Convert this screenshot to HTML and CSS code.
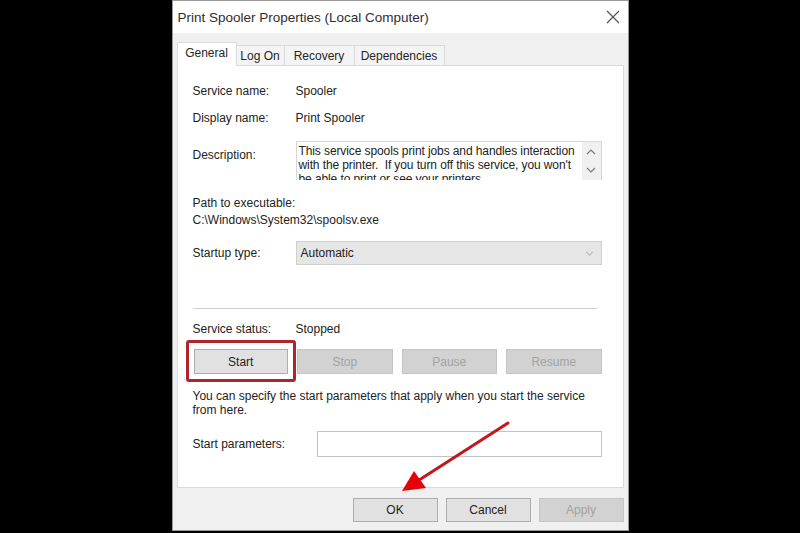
FILE: index.html
```html
<!DOCTYPE html>
<html>
<head>
<meta charset="utf-8">
<link rel="stylesheet" href="styles.css">
</head>
<body>
<div class="stage">
  <div class="dialog">
    <div class="titlebar">
      <span class="title">Print Spooler Properties (Local Computer)</span>
      <svg class="close" width="14" height="14" viewBox="0 0 14 14"><path d="M1 1L13 13M13 1L1 13" stroke="#555" stroke-width="1.2" fill="none"/></svg>
    </div>
    <div class="body">
      <div class="tabs">
        <div class="tab active t-general">General</div>
        <div class="tab t-logon">Log On</div>
        <div class="tab t-recovery">Recovery</div>
        <div class="tab t-deps">Dependencies</div>
      </div>
      <div class="panel">
        <div class="row r1"><span class="lbl">Service name:</span><span>Spooler</span></div>
        <div class="row r2"><span class="lbl">Display name:</span><span>Print Spooler</span></div>
        <div class="desc-row">
          <span class="lbl desc-lbl">Description:</span>
          <div class="descbox">
            <div class="desc-text">
              <div>This service spools print jobs and handles interaction</div>
              <div>with the printer.&nbsp; If you turn off this service, you won't</div>
              <div>be able to print or see your printers.</div>
            </div>
            <div class="scrollbar">
              <svg width="10" height="6" viewBox="0 0 10 6"><path d="M1 5L5 1L9 5" stroke="#777" stroke-width="1.1" fill="none"/></svg>
              <svg width="10" height="6" viewBox="0 0 10 6"><path d="M1 1L5 5L9 1" stroke="#777" stroke-width="1.1" fill="none"/></svg>
            </div>
          </div>
        </div>
        <div class="line path-lbl">Path to executable:</div>
        <div class="line path-val">C:\Windows\System32\spoolsv.exe</div>
        <div class="row startup-row">
          <span class="lbl">Startup type:</span>
          <div class="combo">
            <span>Automatic</span>
            <svg width="9" height="5" viewBox="0 0 10 6"><path d="M1 1L5 5L9 1" stroke="#9a9a9a" stroke-width="1.1" fill="none"/></svg>
          </div>
        </div>
        <div class="sep"></div>
        <div class="row status-row"><span class="lbl">Service status:</span><span>Stopped</span></div>
        <div class="btnrow">
          <div class="start-wrap">
            <div class="btn">Start</div>
            <div class="highlight"></div>
          </div>
          <div class="btn disabled">Stop</div>
          <div class="btn disabled">Pause</div>
          <div class="btn disabled">Resume</div>
        </div>
        <div class="help">You can specify the start parameters that apply when you start the service<br>from here.</div>
        <div class="row params-row">
          <span class="lbl params-lbl">Start parameters:</span>
          <div class="input"></div>
        </div>
      </div>
      <div class="footer">
        <div class="btn fbtn">OK</div>
        <div class="btn fbtn">Cancel</div>
        <div class="btn fbtn disabled">Apply</div>
      </div>
    </div>
  </div>
  <svg class="arrow" width="800" height="533" viewBox="0 0 800 533">
    <line x1="508" y1="423" x2="416" y2="482" stroke="#c4161c" stroke-width="3" stroke-linecap="round"/>
    <polygon points="402,491 414,471 426,488" fill="#e6000a"/>
  </svg>
</div>
</body>
</html>
```

FILE: styles.css
```css
html, body {
  margin: 0;
  padding: 0;
  background: #000;
  width: 800px;
  height: 533px;
  overflow: hidden;
  font-family: "Liberation Sans", Arial, sans-serif;
  font-size: 12px;
  color: #222;
}

.stage {
  position: relative;
  width: 800px;
  height: 533px;
  display: flex;
  justify-content: center;
}

.dialog {
  box-sizing: border-box;
  width: 457px;
  height: 531px;
  border: 1px solid #9a9a9a;
  background: #f0f0f0;
  display: flex;
  flex-direction: column;
}

.titlebar {
  height: 32px;
  background: #fff;
  display: flex;
  align-items: center;
  justify-content: space-between;
  padding-left: 5px;
  padding-right: 8px;
}

.title {
  font-size: 13.5px;
  color: #2e2e2e;
}

.body {
  padding: 9px 4px 0 4px;
  display: flex;
  flex-direction: column;
}

.tabs {
  display: flex;
  align-items: flex-end;
  height: 23px;
  position: relative;
  z-index: 1;
}

.tab {
  box-sizing: border-box;
  height: 20px;
  line-height: 20px;
  text-align: center;
  background: #f4f4f4;
  border: 1px solid #dadada;
  border-bottom: none;
  margin-left: -1px;
  color: #262626;
}

.tab.active {
  height: 24px;
  line-height: 21px;
  background: #fff;
  margin-left: 0;
  margin-bottom: -1px;
  position: relative;
  z-index: 2;
}

.t-general { width: 60px; }
.t-logon { width: 49px; }
.t-recovery { width: 71px; }
.t-deps { width: 91px; }

.panel {
  box-sizing: border-box;
  height: 423px;
  background: #fff;
  border: 1px solid #dadada;
  padding: 17px 21px 0 15px;
  display: flex;
  flex-direction: column;
}

.row {
  display: flex;
  align-items: center;
  height: 16px;
  line-height: 16px;
}

.lbl {
  width: 103px;
  flex: none;
}

.r2 { margin-top: 11px; }

.desc-row {
  display: flex;
  margin-top: 15px;
  height: 39px;
}

.desc-lbl {
  margin-top: 6px;
  line-height: 16px;
  height: 16px;
}

.descbox {
  box-sizing: border-box;
  width: 306px;
  height: 39px;
  border: 1px solid #d6d6d6;
  border-bottom: none;
  display: flex;
  overflow: hidden;
}

.desc-text {
  flex: 1;
  padding: 2px 0 0 2px;
  line-height: 14px;
  letter-spacing: -0.1px;
  white-space: nowrap;
  overflow: hidden;
}

.scrollbar {
  width: 19px;
  background: #f0f0f0;
  display: flex;
  flex-direction: column;
  align-items: center;
  justify-content: space-between;
  padding: 7px 0 7px 0;
}

.line {
  height: 16px;
  line-height: 16px;
}

.path-lbl { margin-top: 15px; }
.path-val { margin-top: 1px; }

.startup-row {
  margin-top: 13px;
  height: 24px;
}

.combo {
  box-sizing: border-box;
  width: 306px;
  height: 24px;
  background: #e6e6e6;
  border: 1px solid #cfcfcf;
  display: flex;
  align-items: center;
  justify-content: space-between;
  padding: 0 7px 0 4px;
}

.sep {
  margin-top: 43px;
  height: 1px;
  background: #cfcfcf;
  margin-right: 5px;
}

.status-row { margin-top: 12px; }

.btnrow {
  margin-top: 12px;
  height: 25px;
  display: grid;
  grid-template-columns: repeat(4, 1fr);
  column-gap: 9px;
}

.start-wrap {
  position: relative;
  margin-left: 1px;
}

.btn {
  box-sizing: border-box;
  height: 25px;
  background: #e1e1e1;
  border: 1px solid #adadad;
  display: flex;
  align-items: center;
  justify-content: center;
  color: #1e1e1e;
}

.btn.disabled {
  background: #d2d2d2;
  border-color: #c6c6c6;
  color: #a2a2a2;
}

.highlight {
  position: absolute;
  left: -8px;
  top: -9px;
  width: 110px;
  height: 42px;
  box-sizing: border-box;
  border: 3px solid #b3232b;
  border-radius: 3px;
}

.help {
  margin-top: 15px;
  line-height: 14px;
}

.params-row {
  margin-top: 14px;
  height: 26px;
}

.params-lbl { width: 124px; }

.input {
  box-sizing: border-box;
  flex: 1;
  height: 26px;
  border: 1px solid #c4c4c4;
  background: #fff;
}

.footer {
  display: flex;
  justify-content: flex-end;
  gap: 8px;
  padding-top: 10px;
}

.fbtn {
  width: 85px;
  height: 24px;
}

.arrow {
  position: absolute;
  left: 0;
  top: 0;
  pointer-events: none;
}
```
